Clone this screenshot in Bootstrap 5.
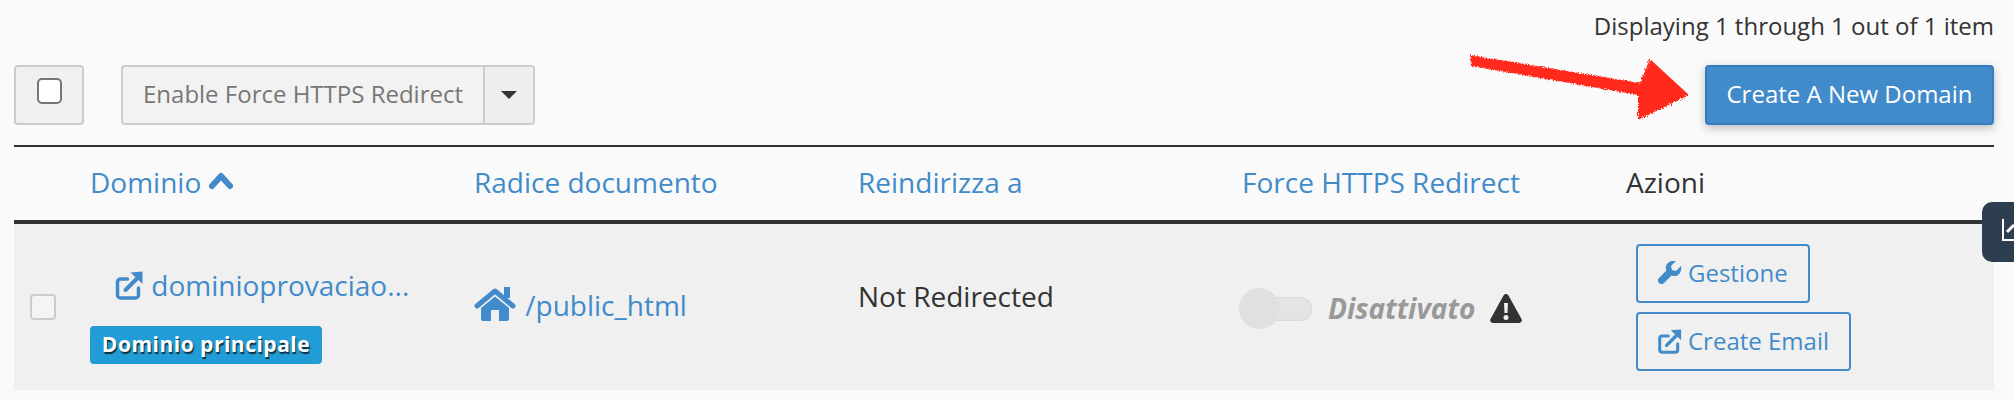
<!DOCTYPE html>
<html lang="it">
<head>
    <meta charset="UTF-8">
    <title>Domini</title>
    <link href="https://cdn.jsdelivr.net/npm/bootstrap@5.3.0/dist/css/bootstrap.min.css" rel="stylesheet">
    <style>
        body { background: #fafafa; font-family: "Open Sans", sans-serif; font-size: 28px; color: #333; overflow: hidden; }
        a { color: #428bca; text-decoration: none; }
        .page-wrap { padding: 0 20px 0 14px; }
        .paging-line { height: 65px; padding-top: 11px; font-size: 24px; line-height: 30px; text-align: right; }
        .tool-bar { height: 80px; }
        .tool-check { width: 70px; height: 60px; padding-bottom: 8px; background: #f0f0f0; border: 2px solid #ccc; border-radius: 4px; }
        .tool-check i { display: block; width: 25px; height: 26px; background: #fff; border: 2px solid #767676; border-radius: 5px; }
        .bulk-group { margin-left: 37px; height: 60px; border: 2px solid #ccc; border-radius: 4px; background: #f2f2f2; color: #777; font-size: 24px; }
        .bulk-label { width: 360px; text-align: center; line-height: 54px; }
        .bulk-caret { width: 50px; border-left: 2px solid #ccc; background: #eee; }
        .bulk-caret i { border-top: 8px solid #333; border-left: 8px solid transparent; border-right: 8px solid transparent; }
        .create-btn { width: 289px; height: 60px; background: #428bca; border: 2px solid #357ebd; border-radius: 4px; color: #fff; font-size: 24px; padding: 0 0 2px; box-shadow: 0 3px 10px rgba(0,0,0,.25); }
        .create-btn:hover { background: #428bca; color: #fff; border-color: #357ebd; }
        .dom-table { table-layout: fixed; width: 1980px; margin: 0; border-top: 2px solid #333; --bs-table-bg: transparent; --bs-table-color: #333; }
        .dom-table th { height: 76px; padding: 0 12px 3px; font-weight: 400; vertical-align: middle; border-bottom: 4px solid #333; white-space: nowrap; }
        .dom-table td { height: 168px; padding: 0 12px; vertical-align: middle; background: #f0f0f0; border: 0; }
        .dom-table td.dom-cell { vertical-align: top; padding-top: 40px; }
        .dom-table td.root-cell { padding-bottom: 4px; }
        .dom-table td.redir-cell { padding-bottom: 22px; }
        .dom-table td.force-cell { padding-top: 2px; }
        .w-check { width: 64px; }
        .w-dom { width: 384px; }
        .w-root { width: 384px; }
        .w-redir { width: 384px; }
        .w-force { width: 384px; }
        .row-check { display: block; width: 26px; height: 26px; margin-left: 4px; background: #f4f4f4; border: 2px solid #ccc; border-radius: 4px; }
        .dom-link { padding-left: 25px; white-space: nowrap; }
        .dom-badge { display: block; width: 232px; height: 38px; margin-top: 20px; background: #229cd6; color: #fff; font-size: 21px; font-weight: 700; line-height: 37px; text-align: center; border-radius: 4px; text-shadow: 1px 2px 1px rgba(0,0,0,.7); letter-spacing: .5px; white-space: nowrap; }
        .ico-blue { fill: #428bca; }
        .ico-line { fill: none; stroke: #428bca; }
        .sort-ico { vertical-align: 3px; }
        .ext-ico { vertical-align: -4px; }
        .home-ico { margin-right: 2px; vertical-align: -5px; }
        .warn-ico { margin-left: 15px; }
        .tog-wrap { width: 73px; height: 41px; margin-left: -3px; }
        .tog-track { position: absolute; left: 34px; top: 9px; width: 39px; height: 24px; background: #e4e4e4; border-radius: 0 12px 12px 0; box-shadow: inset 0 0 2px rgba(0,0,0,.15); }
        .tog-knob { position: absolute; left: 0; top: 0; width: 41px; height: 41px; background: #e0e0e0; border-radius: 50%; }
        .state-off { color: #999; font-weight: 700; font-style: italic; }
        .act-stack { gap: 9px; }
        .act-btn { display: inline-flex; align-items: center; gap: 6px; height: 59px; padding: 0 20px; margin-left: 10px; background: transparent; border: 2px solid #428bca; border-radius: 4px; color: #428bca; font-size: 24px; }
        .act-btn:hover { color: #428bca; border-color: #428bca; }
        .side-tab { position: fixed; right: 0; top: 202px; width: 32px; height: 60px; background: #2c3e50; border-radius: 10px 0 0 10px; overflow: hidden; }
        .red-arrow { position: fixed; left: 1460px; top: 45px; pointer-events: none; }
    </style>
</head>
<body>
    <div class="page-wrap">
        <div class="paging-line">Displaying 1 through 1 out of 1 item</div>

        <!-- Toolbar -->
        <div class="tool-bar d-flex align-items-start justify-content-between">
            <div class="d-flex">
                <div class="tool-check d-flex align-items-center justify-content-center"><i></i></div>
                <div class="bulk-group d-flex">
                    <div class="bulk-label">Enable Force HTTPS Redirect</div>
                    <div class="bulk-caret d-flex align-items-center justify-content-center"><i></i></div>
                </div>
            </div>
            <button class="btn create-btn" type="button">Create A New Domain</button>
        </div>

        <table class="table dom-table">
            <thead>
                <tr>
                    <th class="w-check"></th>
                    <th class="w-dom"><a href="#">Dominio
                        <svg class="sort-ico" width="24" height="18" viewBox="0 0 24 18"><path d="M3 14 L12 4 L21 14" fill="none" stroke="#428bca" stroke-width="6" stroke-linecap="round" stroke-linejoin="round"/></svg></a></th>
                    <th class="w-root"><a href="#">Radice documento</a></th>
                    <th class="w-redir"><a href="#">Reindirizza a</a></th>
                    <th class="w-force"><a href="#">Force HTTPS Redirect</a></th>
                    <th>Azioni</th>
                </tr>
            </thead>
            <tbody>
                <tr>
                    <td><span class="row-check"></span></td>
                    <td class="dom-cell">
                        <div class="dom-link"><a href="#">
                            <svg class="ext-ico" width="29" height="29" viewBox="0 0 28 29"><path class="ico-line" stroke-width="3.500" stroke-linecap="round" d="M12 8H5a3 3 0 0 0-3 3v13a3 3 0 0 0 3 3h15a3 3 0 0 0 3-3v-7"/><path class="ico-line" stroke-width="4" stroke-linecap="round" d="M10 19L21 8"/><path class="ico-blue" d="M15 1.500L27 0.500V13z"/></svg>
                            dominioprovaciao...</a></div>
                        <span class="dom-badge">Dominio principale</span>
                    </td>
                    <td class="root-cell"><a href="#">
                        <svg class="home-ico" width="42" height="34" viewBox="0 0 42 34"><path class="ico-blue" d="M21 9.500L7 21V32a2 2 0 0 0 2 2h8V23h8V34h8a2 2 0 0 0 2-2V21z"/><path class="ico-blue" d="M30 0h6v11h-6z"/><path class="ico-line" stroke-width="5" stroke-linecap="round" stroke-linejoin="round" d="M3 19L21 4l18 15"/></svg>
                        /public_html</a></td>
                    <td class="redir-cell">Not Redirected</td>
                    <td class="force-cell">
                        <div class="d-flex align-items-center">
                            <div class="tog-wrap position-relative"><span class="tog-track"></span><span class="tog-knob"></span></div>
                            <span class="state-off ms-3">Disattivato</span>
                            <svg class="warn-ico" width="32" height="29" viewBox="0 0 32 29"><path fill="#333" fill-rule="evenodd" d="M16 0c1 0 2 .6 2.500 1.500L31.500 25c1 1.800-.2 4-2.500 4H3c-2.300 0-3.500-2.200-2.500-4L13.500 1.500C14 .6 15 0 16 0zM14 9l.5 10h3L18 9zM16 21a2.500 2.500 0 1 0 0 5 2.500 2.500 0 0 0 0-5z"/></svg>
                        </div>
                    </td>
                    <td>
                        <div class="act-stack d-flex flex-column align-items-start">
                            <a class="act-btn" href="#">
                                <svg width="24" height="24" viewBox="0 0 24 24"><path class="ico-blue" d="M23 5l-5 5-4-1-1-4 5-5C14 -1 9 1 8 5c-.4 1.600-.2 3 .4 4.500L1 17c-1.500 1.500-1.500 3.500 0 5s3.500 1.500 5 0l7.500-7.500c1.500.6 3 .8 4.500.4 4-1 6-6 5-10z"/></svg>
                                Gestione</a>
                            <a class="act-btn" href="#">
                                <svg width="24" height="25" viewBox="0 0 28 29"><path class="ico-line" stroke-width="3.500" stroke-linecap="round" d="M12 8H5a3 3 0 0 0-3 3v13a3 3 0 0 0 3 3h15a3 3 0 0 0 3-3v-7"/><path class="ico-line" stroke-width="4" stroke-linecap="round" d="M10 19L21 8"/><path class="ico-blue" d="M15 1.500L27 0.500V13z"/></svg>
                                Create Email</a>
                        </div>
                    </td>
                </tr>
            </tbody>
        </table>
    </div>

    <!-- Overlay: hand drawn arrow and side tab -->
    <svg class="red-arrow" width="240" height="85" viewBox="0 0 240 85">
        <filter id="rough"><feTurbulence type="fractalNoise" baseFrequency=".7" numOctaves="2" seed="4"/><feDisplacementMap in="SourceGraphic" scale="5"/></filter>
        <path filter="url(#rough)" fill="#ff2c1f" d="M10 10 L180 38 L190 14 L229 50 L178 75 L178 50 L11 21z"/>
    </svg>
    <div class="side-tab">
        <svg width="32" height="60" viewBox="0 0 32 60"><path d="M21 17v21h11" fill="none" stroke="#fff" stroke-width="2"/><path d="M25 30l7-7" fill="none" stroke="#fff" stroke-width="3"/></svg>
    </div>

    <script src="https://cdn.jsdelivr.net/npm/bootstrap@5.3.0/dist/js/bootstrap.bundle.min.js"></script>
</body>
</html>
